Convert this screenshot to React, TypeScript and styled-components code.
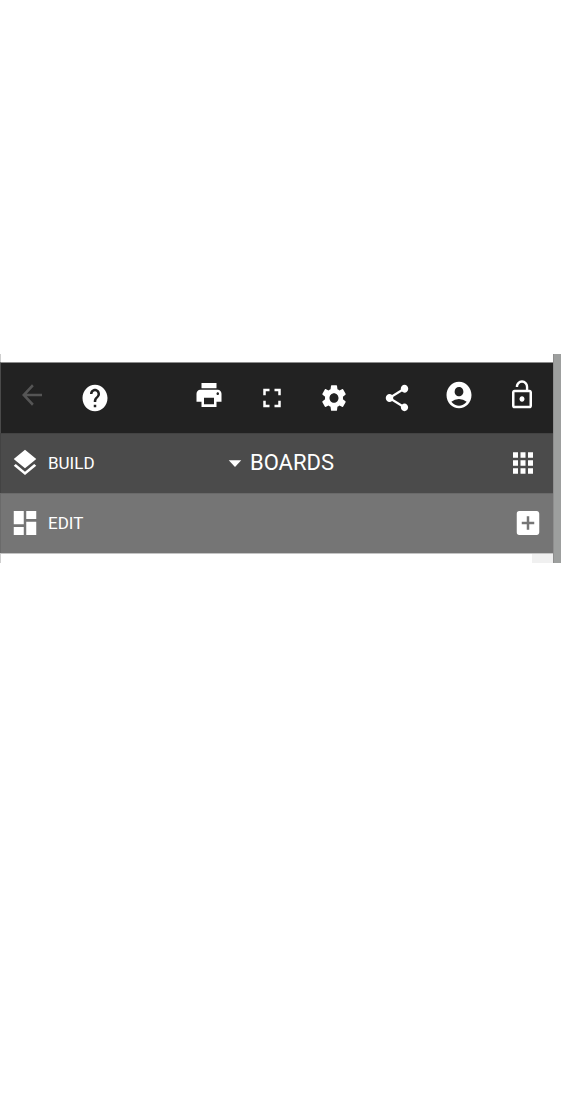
import React from "react";
import styled, { createGlobalStyle } from "styled-components";
import {
  MdAccountCircle,
  MdAddBox,
  MdApps,
  MdArrowBack,
  MdArrowDropDown,
  MdDashboard,
  MdFullscreen,
  MdHelp,
  MdLayers,
  MdLockOpen,
  MdPrint,
  MdSettings,
  MdShare,
} from "react-icons/md";

const GlobalStyle = createGlobalStyle`
  *, *::before, *::after { box-sizing: border-box; }
  body {
    margin: 0;
    background: #fff;
    font-family: Roboto, "Liberation Sans", sans-serif;
  }
`;

const Page = styled.main`
  display: flex;
  padding: 354px 2px 0 0;
`;

const Panel = styled.section`
  flex: 1;
  min-width: 0;
`;

const Margin = styled.div`
  height: 8px;
  border-left: 1px solid #cfcfcf;
`;

const ScrollTrack = styled.div`
  width: 8px;
  background: #9d9f9e;
  border-left: 1px solid #8e8e8e;
`;

const TopBar = styled.nav`
  display: flex;
  height: 71px;
  background: #222;
  border-top: 1px solid #8c8c8c;
  border-left: 1px solid #4a4a4a;
`;

const Tools = styled.div<{ $share: number }>`
  display: flex;
  flex: ${(p) => p.$share} 1 0;
  min-width: 0;
`;

const Spacer = styled.div`
  flex: 5 1 0;
`;

const IconButton = styled.button<{ $raised?: boolean; $dim?: boolean }>`
  flex: 1 1 0;
  min-width: 0;
  display: flex;
  align-items: center;
  justify-content: center;
  padding: 0 0 ${(p) => (p.$raised ? 6 : 0)}px;
  border: 0;
  background: none;
  color: ${(p) => (p.$dim ? "#555" : "#fff")};
  svg {
    flex: none;
    width: 30px;
    height: 32px;
  }
`;

const Bar = styled.div<{ $tone: string; $edge: string }>`
  display: grid;
  grid-template-columns: 1fr auto 1fr;
  align-items: center;
  height: 60px;
  padding-bottom: 2px;
  background: ${(p) => p.$tone};
  border-top: 1px solid ${(p) => p.$edge};
  border-left: 1px solid ${(p) => p.$edge};
`;

const BarButton = styled.button<{ $title?: boolean }>`
  display: flex;
  align-items: center;
  justify-self: start;
  gap: ${(p) => (p.$title ? 0 : 8)}px;
  padding: 0 0 0 ${(p) => (p.$title ? 0 : 9)}px;
  border: 0;
  background: none;
  color: #fff;
  font-family: inherit;
  font-size: ${(p) => (p.$title ? 22 : 17)}px;
  line-height: 30px;
  svg {
    flex: none;
    width: 30px;
    height: 32px;
  }
`;

const EndButton = styled.button<{ $inset: number }>`
  grid-column: 3;
  justify-self: end;
  display: flex;
  padding: 0;
  margin-right: ${(p) => p.$inset}px;
  border: 0;
  background: none;
  color: #fff;
  svg {
    width: 30px;
    height: 32px;
  }
`;

const Content = styled.div`
  display: flex;
  justify-content: flex-end;
  height: 10px;
  border-top: 1px solid #c4c4c4;
  border-left: 1px solid #cfcfcf;
`;

const Corner = styled.div`
  width: 21px;
  background: #f0f0f0;
`;

const stretch = { preserveAspectRatio: "none", "aria-hidden": true } as const;

export default function App() {
  return (
    <>
      <GlobalStyle />
      <Page>
        <Panel>
          <Margin />
          <TopBar aria-label="Main">
            <Tools $share={12}>
              <IconButton $raised $dim aria-label="Back">
                <MdArrowBack {...stretch} />
              </IconButton>
              <IconButton aria-label="Help">
                <MdHelp {...stretch} />
              </IconButton>
            </Tools>
            <Spacer />
            <Tools $share={36}>
              <IconButton $raised aria-label="Print">
                <MdPrint {...stretch} />
              </IconButton>
              <IconButton aria-label="Full screen">
                <MdFullscreen {...stretch} />
              </IconButton>
              <IconButton aria-label="Settings">
                <MdSettings {...stretch} />
              </IconButton>
              <IconButton aria-label="Share">
                <MdShare {...stretch} />
              </IconButton>
              <IconButton $raised aria-label="Account">
                <MdAccountCircle {...stretch} />
              </IconButton>
              <IconButton $raised aria-label="Unlock">
                <MdLockOpen {...stretch} />
              </IconButton>
            </Tools>
          </TopBar>
          <Bar $tone="#4b4b4b" $edge="#434343">
            <BarButton>
              <MdLayers {...stretch} />
              BUILD
            </BarButton>
            <BarButton $title>
              <MdArrowDropDown {...stretch} />
              BOARDS
            </BarButton>
            <EndButton $inset={15} aria-label="All boards">
              <MdApps {...stretch} />
            </EndButton>
          </Bar>
          <Bar $tone="#757575" $edge="#6a6a6a">
            <BarButton>
              <MdDashboard {...stretch} />
              EDIT
            </BarButton>
            <EndButton $inset={10} aria-label="Add board">
              <MdAddBox {...stretch} />
            </EndButton>
          </Bar>
          <Content>
            <Corner />
          </Content>
        </Panel>
        <ScrollTrack />
      </Page>
    </>
  );
}
